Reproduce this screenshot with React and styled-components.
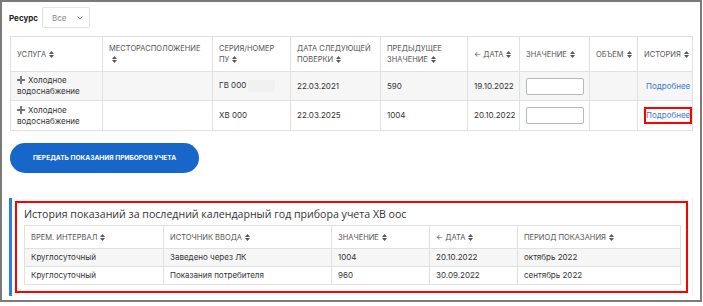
import React from "react";
import styled, { createGlobalStyle } from "styled-components";

const Global = createGlobalStyle`
  html, body { margin: 0; padding: 0; background: #fff; }
  body { font-family: Inter, "Open Sans", Arial, sans-serif; color: #333; }
  * { box-sizing: border-box; }
`;

const Frame = styled.div`
  width: 702px;
  height: 302px;
  border: 2px solid #7b7b7b;
  background: #fff;
  padding: 5px 8px 0 7px;
  display: flex;
  flex-direction: column;
`;

const FilterRow = styled.div`
  display: flex;
  align-items: center;
  gap: 4px;
  height: 21px;
  margin-bottom: 8px;
`;

const Label = styled.span`
  font-size: 8px;
  font-weight: 700;
  color: #222;
`;

const Select = styled.div`
  width: 48px;
  height: 21px;
  border: 1px solid #e2e2e2;
  border-radius: 2px;
  display: flex;
  align-items: center;
  justify-content: space-between;
  padding: 0 6px 0 9px;
  font-size: 8px;
  color: #888;
`;

const Table = styled.table`
  border-collapse: collapse;
  table-layout: fixed;
  width: ${(p) => p.$w}px;
  margin-left: ${(p) => p.$ml || 0}px;
  font-size: 8px;
  color: #333;
`;

const Th = styled.th`
  border: 1px solid #e0e0e0;
  text-align: left;
  font-weight: 400;
  font-size: 7.5px;
  line-height: 11px;
  color: #555;
  text-transform: uppercase;
  padding: 0 ${(p) => (p.$tight ? 0 : 4)}px 0 6px;
  white-space: ${(p) => (p.$tight ? "nowrap" : "normal")};
  height: ${(p) => p.$h}px;
  vertical-align: middle;
`;

const Tr = styled.tr`
  background: ${(p) => (p.$alt ? "#f6f6f6" : "#fff")};
`;

const Td = styled.td`
  border: 1px solid #e0e0e0;
  padding: 0 4px 0 6px;
  height: ${(p) => p.$h}px;
  line-height: 11px;
  vertical-align: middle;
  text-align: ${(p) => p.$align || "left"};
  color: #333;
`;

const SortIcon = () => (
  <svg width="5" height="7" viewBox="0 0 5 7" style={{ marginLeft: 3, verticalAlign: "-1px" }}>
    <path d="M2.5 0 L5 3 L0 3 Z M2.5 7 L5 4 L0 4 Z" fill="#555" />
  </svg>
);

const PlusIcon = () => (
  <svg width="8" height="8" viewBox="0 0 8 8" style={{ marginRight: 3, verticalAlign: "-1px" }}>
    <path d="M3 0h2v3h3v2H5v3H3V5H0V3h3z" fill="#777" />
  </svg>
);

const Redacted = styled.span`
  display: inline-block;
  width: 27px;
  height: 12px;
  background: #f1f1f1;
  vertical-align: middle;
  margin-left: 2px;
`;

const ValueInput = styled.div`
  width: 58px;
  height: 17px;
  border: 1px solid #b8b8b8;
  border-radius: 2px;
  background: #fff;
`;

const Link = styled.a`
  color: #3a78c8;
  font-size: 8px;
  text-decoration: none;
  display: inline-block;
  padding: 1px 0;
  border: 2px solid ${(p) => (p.$marked ? "#ff0000" : "transparent")};
`;

const Button = styled.button`
  margin-top: 12px;
  width: 189px;
  height: 30px;
  border: none;
  border-radius: 15px;
  background: #1766c9;
  color: #fff;
  font-family: Inter, Arial, sans-serif;
  font-weight: 700;
  font-size: 6.6px;
  letter-spacing: 0;
  text-transform: uppercase;
  padding: 0;
  margin-left: 1px;
`;

const HistorySection = styled.div`
  margin-top: 25px;
  width: 684px;
  border-left: 3px solid #2a7fe0;
  border-right: 1px solid #ececec;
  padding: 3px 4px 3px 3px;
`;

const Marked = styled.div`
  border: 2px solid #ff0000;
  padding: 3px 6px 6px 7px;
`;

const Title = styled.div`
  font-family: "Open Sans", Arial, sans-serif;
  font-size: 10.6px;
  line-height: 17px;
  color: #333;
  margin-bottom: 2px;
`;

const ChevronDown = () => (
  <svg width="6" height="4" viewBox="0 0 6 4">
    <path d="M0.5 0.5 L3 3 L5.5 0.5" stroke="#888" strokeWidth="1" fill="none" />
  </svg>
);

const topCols = [92, 110, 78, 90, 87, 52, 70, 48, 55];
const botCols = [139, 168, 98, 88, 163];

export default function App() {
  return (
    <>
      <Global />
      <Frame>
        <FilterRow>
          <Label>Ресурс</Label>
          <Select>
            <span>Все</span>
            <ChevronDown />
          </Select>
        </FilterRow>

        <Table $w={682} $ml={1}>
          <colgroup>
            {topCols.map((w, i) => (
              <col key={i} style={{ width: w }} />
            ))}
          </colgroup>
          <thead>
            <tr>
              <Th $h={35}>Услуга<SortIcon /></Th>
              <Th $h={35}>Месторасположение<SortIcon /></Th>
              <Th $h={35}>Серия/номер<br />ПУ<SortIcon /></Th>
              <Th $h={35}>Дата следующей поверки<SortIcon /></Th>
              <Th $h={35}>Предыдущее значение<SortIcon /></Th>
              <Th $h={35} $tight>← Дата<SortIcon /></Th>
              <Th $h={35} $tight>Значение<SortIcon /></Th>
              <Th $h={35} $tight>Объем<SortIcon /></Th>
              <Th $h={35} $tight>История<SortIcon /></Th>
            </tr>
          </thead>
          <tbody>
            <Tr $alt>
              <Td $h={29}><PlusIcon />Холодное водоснабжение</Td>
              <Td $h={29}></Td>
              <Td $h={29}>ГВ 000<Redacted /></Td>
              <Td $h={29}>22.03.2021</Td>
              <Td $h={29}>590</Td>
              <Td $h={29}>19.10.2022</Td>
              <Td $h={29}><ValueInput /></Td>
              <Td $h={29}></Td>
              <Td $h={29} $align="center"><Link>Подробнее</Link></Td>
            </Tr>
            <Tr>
              <Td $h={30}><PlusIcon />Холодное водоснабжение</Td>
              <Td $h={30}></Td>
              <Td $h={30}>ХВ 000</Td>
              <Td $h={30}>22.03.2025</Td>
              <Td $h={30}>1004</Td>
              <Td $h={30}>20.10.2022</Td>
              <Td $h={30}><ValueInput /></Td>
              <Td $h={30}></Td>
              <Td $h={30} $align="center"><Link $marked>Подробнее</Link></Td>
            </Tr>
          </tbody>
        </Table>

        <Button>Передать показания приборов учета</Button>

        <HistorySection>
          <Marked>
            <Title>История показаний за последний календарный год прибора учета ХВ оос</Title>
            <Table $w={656}>
              <colgroup>
                {botCols.map((w, i) => (
                  <col key={i} style={{ width: w }} />
                ))}
              </colgroup>
              <thead>
                <tr>
                  <Th $h={23}>Врем. интервал<SortIcon /></Th>
                  <Th $h={23}>Источник ввода<SortIcon /></Th>
                  <Th $h={23}>Значение<SortIcon /></Th>
                  <Th $h={23}>← Дата<SortIcon /></Th>
                  <Th $h={23}>Период показания<SortIcon /></Th>
                </tr>
              </thead>
              <tbody>
                <Tr $alt>
                  <Td $h={18}>Круглосуточный</Td>
                  <Td $h={18}>Заведено через ЛК</Td>
                  <Td $h={18}>1004</Td>
                  <Td $h={18}>20.10.2022</Td>
                  <Td $h={18}>октябрь 2022</Td>
                </Tr>
                <Tr>
                  <Td $h={18}>Круглосуточный</Td>
                  <Td $h={18}>Показания потребителя</Td>
                  <Td $h={18}>960</Td>
                  <Td $h={18}>30.09.2022</Td>
                  <Td $h={18}>сентябрь 2022</Td>
                </Tr>
              </tbody>
            </Table>
          </Marked>
        </HistorySection>
      </Frame>
    </>
  );
}
